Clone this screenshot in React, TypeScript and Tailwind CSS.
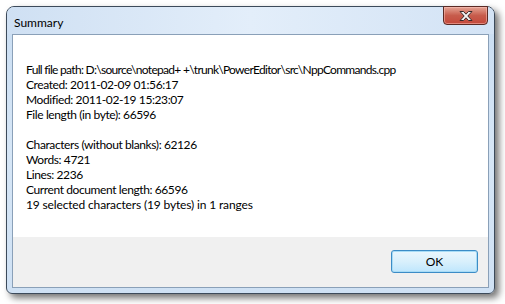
import React from "react";

const lines1 = [
  "Created: 2011-02-09 01:56:17",
  "Modified: 2011-02-19 15:23:07",
  "File length (in byte): 66596",
];
const lines2 = [
  "Characters (without blanks): 62126",
  "Words: 4721",
  "Lines: 2236",
  "Current document length: 66596",
];

export default function App() {
  return (
    <div
      className="w-[505px] h-[304px] bg-white pl-[6px] pt-[6px] overflow-hidden"
      style={{ fontFamily: 'Lato, "Noto Sans", sans-serif' }}
    >
      <div className="w-[489px] h-[288px] rounded-t-[8px] rounded-b-[6px] border border-[#3c4a5a] bg-gradient-to-b from-[#c9ddf2] via-[#d6e6f6] to-[#cfe1f4] shadow-[4px_4px_7px_rgba(0,0,0,0.55)] flex flex-col">
        <div className="h-[27px] flex items-start relative rounded-t-[7px] bg-gradient-to-r from-[#cfe0f3] via-[#e3eefa] to-[#d3e3f5]">
          <div className="pl-[7px] pt-[9px] text-[12px] leading-[14px] text-black">Summary</div>
          <div className="absolute right-[6px] top-[-1px] w-[45px] h-[19px] rounded-b-[4px] border border-[#5a2a24] bg-gradient-to-b from-[#e4a394] via-[#c75c4c] to-[#c4473a] flex items-center justify-center shadow-[inset_0_0_0_1px_rgba(255,200,190,0.5)]">
            <svg width="16" height="12" viewBox="0 0 16 12">
              <path
                d="M2 1.5 L5.5 1.5 L8 4.2 L10.5 1.5 L14 1.5 L9.8 6 L14 10.5 L10.5 10.5 L8 7.8 L5.5 10.5 L2 10.5 L6.2 6 Z"
                fill="#f4f4f4"
                stroke="#3a2a2a"
                strokeWidth="1"
                strokeLinejoin="round"
              />
            </svg>
          </div>
        </div>
        <div className="mx-[5px] mb-[5px] flex-1 border border-[#8aa0b8] flex flex-col">
          <div className="flex-1 bg-white pl-[13px] pt-[27px] text-[12px] leading-[15px] text-black tracking-[-0.4px]">
            <div className="tracking-[-0.7px]">
              Full file path: D:\source\notepad+ +\trunk\PowerEditor\src\NppCommands.cpp
            </div>
            {lines1.map((l) => (
              <div key={l}>{l}</div>
            ))}
            <div className="h-[15px]" />
            {lines2.map((l) => (
              <div key={l}>{l}</div>
            ))}
            <div className="tracking-[-0.15px]">19 selected characters (19 bytes) in 1 ranges</div>
          </div>
          <div className="h-[50px] bg-[#f0f0f0] flex items-start justify-end pr-[10px] pt-[13px]">
            <button className="w-[87px] h-[23px] rounded-[3px] border border-[#3c8cc6] bg-gradient-to-b from-[#eaf6fd] via-[#d9f0fc] to-[#bee6fd] text-[12px] text-black shadow-[inset_0_0_0_1px_#a8dcf6] flex items-center justify-center">
              OK
            </button>
          </div>
        </div>
      </div>
    </div>
  );
}
